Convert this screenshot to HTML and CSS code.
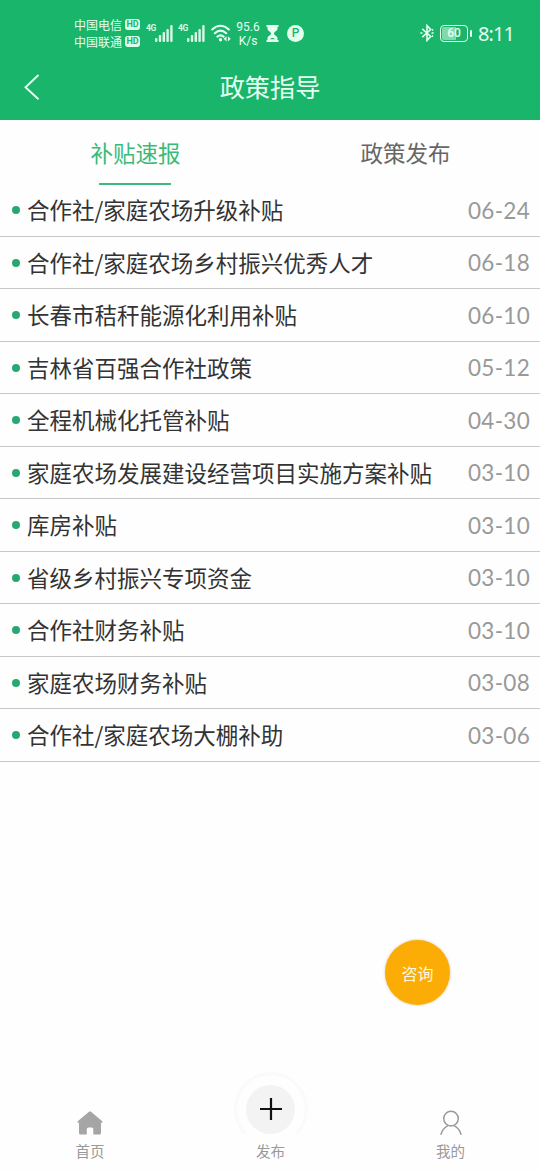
FILE: index.html
```html
<!DOCTYPE html>
<html lang="zh-CN">
<head>
<meta charset="utf-8">
<title>政策指导</title>
<link rel="stylesheet" href="styles.css">
</head>
<body>
<div class="app">
  <header class="top">
    <div class="status">
      <div class="carriers">
        <div class="carrier"><span>中国电信</span><b class="hd">HD</b></div>
        <div class="carrier"><span>中国联通</span><b class="hd">HD</b></div>
      </div>
      <div class="signal signal-first">
        <span class="net">4G</span>
        <svg width="18" height="17" viewBox="0 0 18 17" fill="currentColor"><rect x="0" y="13" width="2.4" height="4" rx="1"/><rect x="3.8" y="10" width="2.4" height="7" rx="1"/><rect x="7.6" y="7" width="2.4" height="10" rx="1"/><rect x="11.4" y="4" width="2.4" height="13" rx="1"/><rect x="15.2" y="0" width="2.4" height="17" rx="1"/></svg>
      </div>
      <div class="signal">
        <span class="net">4G</span>
        <svg width="18" height="17" viewBox="0 0 18 17" fill="currentColor"><rect x="0" y="13" width="2.4" height="4" rx="1"/><rect x="3.8" y="10" width="2.4" height="7" rx="1"/><rect x="7.6" y="7" width="2.4" height="10" rx="1"/><rect x="11.4" y="4" width="2.4" height="13" rx="1"/><rect x="15.2" y="0" width="2.4" height="17" rx="1"/></svg>
      </div>
      <svg class="wifi" width="20" height="18" viewBox="0 0 20 18" fill="none" stroke="currentColor" stroke-width="2.1" stroke-linecap="round"><path d="M1.2 5.5Q9.5-2 17.8 5.5M3.8 9.2Q9.5 4 15.2 9.2M6.4 12.6Q9.5 10 12.6 12.6"/><circle cx="9.5" cy="15.8" r="1.7" fill="currentColor" stroke="none"/><path d="M15.5 12.2v5.2L12.6 14.8zM16.9 12.2v5.2l2.9-2.600z" fill="currentColor" stroke="none"/></svg>
      <div class="speed"><span>95.6</span><span>K/s</span></div>
      <svg class="glass" width="13" height="17" viewBox="0 0 13 17"><path d="M1.5 1.5v2.200c0 2.300 3.500 3 3.500 4.800s-3.500 2.500-3.500 4.800v2.200h10v-2.200c0-2.300-3.500-3-3.500-4.800s3.500-2.500 3.500-4.800V1.500z" fill="currentColor"/><path d="M.5 1h12M.5 16h12" stroke="currentColor" stroke-width="1.8"/><path d="M3.800 14.300q2.700-3 5.400 0z" fill="#19b56b"/></svg>
      <span class="park">P</span>
      <svg class="bluetooth" width="14" height="18" viewBox="0 0 14 18" fill="none" stroke="currentColor" stroke-width="1.6"><path d="M2.300 4.800l8.400 7.700L7 16.400V1.600l3.700 3.900-8.400 7.700"/><path d="M.3 9h2.200M11.500 9h2.200M12 6.300l1-1M12 11.700l1 1" stroke-width="1.7"/></svg>
      <div class="battery"><span class="charge">60</span><i class="nub"></i></div>
      <span class="clock">8:11</span>
    </div>
    <div class="titlebar">
      <svg class="back" width="18" height="28" viewBox="0 0 18 28" fill="none" stroke="currentColor" stroke-width="1.9"><path d="M15.500 2L2.500 14.200l13 12"/></svg>
      <h1>政策指导</h1>
    </div>
  </header>
  <nav class="tabs">
    <a class="tab active">补贴速报</a>
    <a class="tab">政策发布</a>
  </nav>
  <ul class="list">
    <li><span class="name">合作社/家庭农场升级补贴</span><time>06-24</time></li>
    <li><span class="name">合作社/家庭农场乡村振兴优秀人才</span><time>06-18</time></li>
    <li><span class="name">长春市秸秆能源化利用补贴</span><time>06-10</time></li>
    <li><span class="name">吉林省百强合作社政策</span><time>05-12</time></li>
    <li><span class="name">全程机械化托管补贴</span><time>04-30</time></li>
    <li><span class="name">家庭农场发展建设经营项目实施方案补贴</span><time>03-10</time></li>
    <li><span class="name">库房补贴</span><time>03-10</time></li>
    <li><span class="name">省级乡村振兴专项资金</span><time>03-10</time></li>
    <li><span class="name">合作社财务补贴</span><time>03-10</time></li>
    <li><span class="name">家庭农场财务补贴</span><time>03-08</time></li>
    <li><span class="name">合作社/家庭农场大棚补助</span><time>03-06</time></li>
  </ul>
  <a class="consult">咨询</a>
  <footer class="bottom">
    <a class="item">
      <svg width="26" height="26" viewBox="0 0 26 26" fill="#a5a5a5"><path d="M12 1.700q1-.8 2 0l11 9.300q1.300 1.500-.5 1.700H24V23q0 1.500-1.500 1.500h-6.200V19q0-1.500-1.500-1.500h-3.500q-1.500 0-1.500 1.500v5.500H3.500Q2 24.500 2 23V12.700h-.5Q-.3 12.500 1 11z"/></svg>
      <span>首页</span>
    </a>
    <a class="item">
      <span class="ring"><span class="plus"><svg width="24" height="24" viewBox="0 0 24 24" stroke="#111" stroke-width="2.2"><path d="M1 12h22M12 1v22"/></svg></span></span>
      <span>发布</span>
    </a>
    <a class="item">
      <svg width="26" height="26" viewBox="0 0 26 26" fill="none" stroke="#999" stroke-width="1.5" stroke-linecap="round"><circle cx="13" cy="8.600" r="7.300"/><path d="M3 24.300c1-4 3.500-6.800 6.500-8.500M23 24.300c-1-4-3.500-6.800-6.500-8.500"/></svg>
      <span>我的</span>
    </a>
  </footer>
</div>
</body>
</html>
```
FILE: styles.css
```css
* { box-sizing: border-box; }
body { margin: 0; background: #fefefe; font-family: "Noto Sans CJK SC", sans-serif; }
.app { position: relative; width: 540px; height: 1170px; display: flex; flex-direction: column; overflow: hidden; }
.top { height: 120px; background: #19b56b; color: #e6fff1; flex: none; }
.status { height: 56px; padding: 10px 26px 0 74px; display: flex; align-items: center; }
.carriers { width: 67px; }
.carrier { display: flex; align-items: center; gap: 3px; height: 17.5px; font-size: 12px; line-height: 17px; white-space: nowrap; }
.hd { width: 15px; height: 11px; border-radius: 3px; background: #dcffea; color: #19b56b; font: 700 9px/11px Roboto, sans-serif; text-align: center; }
.signal { display: flex; align-items: center; width: 33px; color: #d8fae6; }
.signal-first { margin-left: 5px; width: 32px; }
.net { width: 9px; font: 700 8.5px/10px Roboto, sans-serif; letter-spacing: -.5px; margin-bottom: 11px; }
.wifi { flex: none; }
.speed { width: 26px; margin-left: 4px; padding-top: 1px; display: flex; flex-direction: column; align-items: center; font: 12px/14px Roboto, sans-serif; }
.glass { margin-left: 5px; flex: none; }
.park { width: 17px; height: 17px; margin-left: 8px; border-radius: 50%; background: #e2ffee; color: #19b56b; font: 500 12px/17px Roboto, sans-serif; text-align: center; }
.bluetooth { margin-left: auto; flex: none; }
.battery { display: flex; align-items: center; gap: 2px; margin-left: 6px; }
.charge { width: 28px; height: 17px; border: 1.5px solid currentColor; border-radius: 4px; background: linear-gradient(90deg, #7fd9aa 60%, transparent 60%) content-box; padding: 1px; font: 500 12px/13px Roboto, sans-serif; text-align: center; }
.nub { width: 2px; height: 7px; border-radius: 1px; background: currentColor; }
.clock { width: 36px; margin-left: 6px; padding-top: 1px; font: 20px/24px "Noto Sans", sans-serif; white-space: nowrap; letter-spacing: -.9px; }
.titlebar { display: grid; grid-template-columns: 60px 1fr 60px; align-items: center; height: 62px; }
.back { margin-left: 23px; }
h1 { margin: -2px 0 0; font-size: 25.2px; line-height: 40px; font-weight: 400; text-align: center; }
.tabs { display: grid; grid-template-columns: 1fr 1fr; height: 64px; flex: none; }
.tab { display: flex; flex-direction: column; align-items: center; justify-content: space-between; padding: 13px 0 0 1px; font-size: 22.5px; line-height: 38px; color: #666; }
.tab.active { color: #3cba78; }
.tab.active::after { content: ""; width: 72px; height: 2px; margin: 0 1px -1px 0; background: #3eb883; }
.list { list-style: none; margin: 0; padding: 0; }
.list li { display: flex; align-items: center; height: 52.5px; padding: 1px 10px 0 12px; border-bottom: 1.5px solid #c7c7c7; color: #333; }
.list li::before { content: ""; width: 8px; height: 8px; margin-right: 7px; border-radius: 50%; background: #27a873; }
.name { flex: 1; margin-top: -2px; font-size: 22.5px; line-height: 32px; white-space: nowrap; }
time { padding-top: 1px; color: #999; font: 22.5px/32px Lato, sans-serif; letter-spacing: .3px; }
.consult { position: absolute; left: 385px; top: 940px; width: 65px; height: 65px; border-radius: 50%; background: #fbad05; box-shadow: 0 0 3px #d6c9af; color: #fff8df; font-size: 16px; line-height: 66px; text-align: center; }
.bottom { margin-top: auto; height: 102px; padding-bottom: 9px; display: grid; grid-template-columns: 180px 181px 179px; }
.item { display: flex; flex-direction: column; align-items: center; justify-content: flex-end; gap: 4px; font-size: 14.5px; line-height: 21px; color: #999; }
.ring { width: 74px; height: 74px; margin-bottom: -10px; border: 3px solid #fafafa; border-bottom-color: transparent; border-radius: 50%; display: grid; place-items: center; }
.plus { width: 49px; height: 49px; border-radius: 50%; background: #f3f3f3; display: grid; place-items: center; }
```
